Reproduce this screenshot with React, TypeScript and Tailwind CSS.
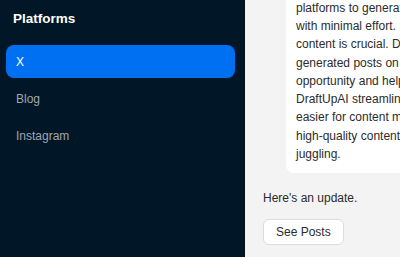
const platforms = ['X', 'Blog', 'Instagram'];

const cardLines = [
  'DraftUpAI helps busy teams turn ideas into',
  'ready-to-share drafts. It connects to your',
  'platforms to generate engaging posts',
  'with minimal effort.',
  'content is crucial. DraftUpAI\u2019s AI-',
  'generated posts on X offer a great',
  'opportunity and help maintain a presence.',
  'DraftUpAI streamlines the process, making it',
  'easier for content managers to produce',
  'high-quality content without the stress of',
  'juggling.',
];

export default function App() {
  const active = 'X';
  return (
    <div className="flex h-screen w-full overflow-hidden font-['Liberation_Sans',Arial,sans-serif]">
      {/* sidebar */}
      <aside className="w-[245px] shrink-0 bg-[#011627] border-r border-[#0a0f16] pl-[6px] pr-[9px] pt-[9px]">
        <h2 className="px-[7px] text-[13.5px] font-bold text-white leading-[20px]">Platforms</h2>
        <nav className="mt-[16px] flex flex-col gap-[4px]">
          {platforms.map(p => (
            <div
              key={p}
              className={
                p === active
                  ? 'h-[33px] flex items-center px-[10px] rounded-[8px] bg-[#0070f3] text-white text-[12px]'
                  : 'h-[33px] flex items-center px-[10px] rounded-[8px] text-[#a0a6ae] text-[12px]'
              }
            >
              {p}
            </div>
          ))}
        </nav>
      </aside>

      {/* chat area */}
      <main className="flex-1 min-w-0 bg-[#f3f3f3] flex flex-col justify-end overflow-hidden pl-[18px] pb-[12px]">
        <div className="ml-[23px] w-[320px] shrink-0 bg-white rounded-[8px] px-[10px] pt-[10px] pb-[10px] text-[12px] leading-[18.25px] text-[#2b2b2b]">
          {cardLines.map((l, i) => (
            <div key={i} className="whitespace-nowrap">{l}</div>
          ))}
        </div>
        <p className="mt-[16px] text-[12px] text-[#2b2b2b] leading-[18px]">Here's an update.</p>
        <div className="mt-[12px]">
          <button className="h-[26px] px-[12px] bg-white border border-[#dcdcdc] rounded-[6px] text-[12px] text-[#2b2b2b]">
            See Posts
          </button>
        </div>
      </main>
    </div>
  );
}
